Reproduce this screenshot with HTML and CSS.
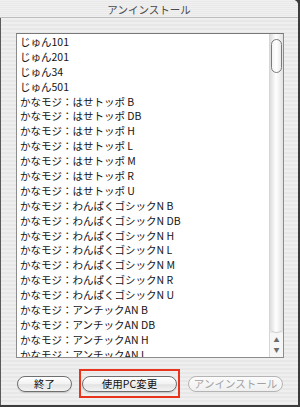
FILE: index.html
```html
<!DOCTYPE html>
<html lang="ja">
<head>
<meta charset="utf-8">
<link rel="stylesheet" href="styles.css">
</head>
<body>
<div class="window">
  <div class="titlebar">アンインストール</div>
  <div class="content">
    <div class="listbox">
      <ul class="items">
        <li>じゅん101</li>
        <li>じゅん201</li>
        <li>じゅん34</li>
        <li>じゅん501</li>
        <li>かなモジ：はせトッポ B</li>
        <li>かなモジ：はせトッポ DB</li>
        <li>かなモジ：はせトッポ H</li>
        <li>かなモジ：はせトッポ L</li>
        <li>かなモジ：はせトッポ M</li>
        <li>かなモジ：はせトッポ R</li>
        <li>かなモジ：はせトッポ U</li>
        <li>かなモジ：わんぱくゴシックN B</li>
        <li>かなモジ：わんぱくゴシックN DB</li>
        <li>かなモジ：わんぱくゴシックN H</li>
        <li>かなモジ：わんぱくゴシックN L</li>
        <li>かなモジ：わんぱくゴシックN M</li>
        <li>かなモジ：わんぱくゴシックN R</li>
        <li>かなモジ：わんぱくゴシックN U</li>
        <li>かなモジ：アンチックAN B</li>
        <li>かなモジ：アンチックAN DB</li>
        <li>かなモジ：アンチックAN H</li>
        <li>かなモジ：アンチックAN L</li>
      </ul>
      <div class="scrollbar">
        <div class="track">
          <div class="thumb"></div>
        </div>
        <div class="arrows">
          <span class="arrow">▲</span>
          <span class="arrow">▼</span>
        </div>
      </div>
    </div>
    <div class="buttons">
      <button class="btn btn-quit">終了</button>
      <span class="highlight"><button class="btn btn-wide">使用PC変更</button></span>
      <button class="btn btn-wide btn-disabled">アンインストール</button>
    </div>
  </div>
</div>
</body>
</html>
```

FILE: styles.css
```css
html, body {
  margin: 0;
  padding: 0;
}
body {
  width: 300px;
  height: 407px;
  background: #3c3c3c;
  font-family: "Noto Sans CJK JP", "DejaVu Sans", sans-serif;
  overflow: hidden;
}
.window {
  width: 298px;
  height: 405px;
  display: flex;
  flex-direction: column;
  border-top-right-radius: 5px;
  overflow: hidden;
  background: #ececec;
}
.titlebar {
  height: 15px;
  padding-top: 2px;
  line-height: 15px;
  text-align: center;
  font-size: 10.5px;
  color: #4a4a4a;
  background: repeating-linear-gradient(#f0f0f0 0 1px, #e9e9e9 1px 2px);
  border-bottom: 1px solid #bdbdbd;
  flex: none;
}
.content {
  flex: 1;
  border-left: 1px solid #5a5a5a;
  background: repeating-linear-gradient(#efefef 0 2px, #e7e7e7 2px 4px);
  padding: 15px 0 0 15px;
  display: flex;
  flex-direction: column;
}
.listbox {
  width: 266px;
  height: 323px;
  border: 1px solid #8c8c8c;
  border-top-color: #777;
  background: #fff;
  display: flex;
  overflow: hidden;
}
.items {
  list-style: none;
  margin: 0;
  padding: 1px 0 0 3px;
  flex: 1;
  overflow: hidden;
}
.items li {
  font-size: 10.5px;
  line-height: 14.9px;
  height: 14.9px;
  color: #141414;
  white-space: nowrap;
}
.scrollbar {
  width: 13px;
  flex: none;
  display: flex;
  flex-direction: column;
  border-left: 1px solid #d6d6d6;
  background: linear-gradient(90deg, #e6e6e6, #fafafa 50%, #e8e8e8);
}
.track {
  flex: 1;
  padding: 5px 0 0 1px;
  border-bottom: 1px solid #cfcfcf;
  border-bottom-left-radius: 6px;
  border-bottom-right-radius: 6px;
  background: linear-gradient(90deg, #dcdcdc, #ffffff 45%, #e2e2e2);
}
.thumb {
  width: 9px;
  height: 32px;
  border: 1px solid #7a7a7a;
  border-radius: 6px;
  background: linear-gradient(90deg, #f4f4f4, #ffffff 50%, #e9e9e9);
}
.arrows {
  height: 24px;
  display: flex;
  flex-direction: column;
  align-items: center;
  justify-content: center;
  gap: 2px;
  background: #f6f6f6;
}
.arrow {
  font-size: 6px;
  line-height: 8px;
  color: #6a6a6a;
}
.buttons {
  display: flex;
  align-items: center;
  margin-top: 11px;
  padding-left: 1px;
}
.btn {
  font-family: "Noto Sans CJK JP", "DejaVu Sans", sans-serif;
  font-size: 10.5px;
  height: 16px;
  line-height: 14px;
  padding: 0;
  margin: 0;
  border: 1px solid #6f6f6f;
  border-radius: 8px;
  color: #111;
  background: linear-gradient(#ffffff, #f2f2f2 50%, #e2e2e2 55%, #f4f4f4);
  box-shadow: 0 1px 1px rgba(0,0,0,0.15);
}
.btn-quit {
  width: 55px;
}
.btn-wide {
  width: 95px;
}
.highlight {
  display: flex;
  align-items: center;
  justify-content: center;
  width: 97px;
  height: 25px;
  border: 2px solid #e8341c;
  margin-left: 7px;
  margin-right: 8px;
}
.btn-disabled {
  color: #a2a2a2;
  border-color: #b4b4b4;
  box-shadow: none;
  background: linear-gradient(#fbfbfb, #f0f0f0);
}
```
